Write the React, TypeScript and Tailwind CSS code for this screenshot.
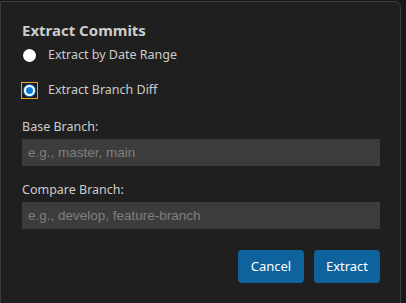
import React from 'react';

const font = { fontFamily: '"Noto Sans", "Open Sans", sans-serif' };

const Radio: React.FC<{ checked?: boolean; focused?: boolean }> = ({ checked, focused }) => (
  <span className={`flex h-[15px] w-[15px] items-center justify-center ${focused ? 'outline outline-1 outline-[#f0a020]' : ''}`}>
    {checked ? (
      <span className="flex h-[13px] w-[13px] items-center justify-center rounded-full bg-[#0b7ad1]">
        <span className="flex h-[11px] w-[11px] items-center justify-center rounded-full bg-white">
          <span className="h-[7px] w-[7px] rounded-full bg-[#0b7ad1]" />
        </span>
      </span>
    ) : (
      <span className="h-[13px] w-[13px] rounded-full bg-white" />
    )}
  </span>
);

const App: React.FC = () => {
  return (
    <div className="h-[303px] w-[406px] overflow-hidden bg-[#181818]" style={font}>
      <div className="mt-[1px] h-[320px] w-[401px] rounded-tr-md border border-[#3c3c3c] bg-[#1f1f1f] pl-[21px] pr-[20px] pt-[17px] text-[12.5px] text-[#cccccc]">
        <h2 className="text-[15px] font-bold leading-[22px] text-[#cccccc]">Extract Commits</h2>

        <label className="mt-[4px] flex h-[20px] items-center gap-[11px]">
          <Radio />
          <span>Extract by Date Range</span>
        </label>

        <label className="mt-[15px] flex h-[20px] items-center gap-[11px]">
          <Radio checked focused />
          <span>Extract Branch Diff</span>
        </label>

        <div className="mt-[17px] leading-[20px]">Base Branch:</div>
        <input
          className="mt-[2px] block h-[27px] w-full bg-[#3c3c3c] px-[6px] text-[13.5px] text-[#cccccc] outline-none placeholder:text-[#7f7f7f]"
          style={{ fontFamily: '"Liberation Sans", Arial, sans-serif' }}
          placeholder="e.g., master, main"
        />

        <div className="mt-[14px] leading-[20px]">Compare Branch:</div>
        <input
          className="mt-[2px] block h-[27px] w-full bg-[#3c3c3c] px-[6px] text-[13.5px] text-[#cccccc] outline-none placeholder:text-[#7f7f7f]"
          style={{ fontFamily: '"Liberation Sans", Arial, sans-serif' }}
          placeholder="e.g., develop, feature-branch"
        />

        <div className="mt-[21px] flex justify-end gap-[10px]">
          <button className="h-[33px] w-[66px] rounded-sm bg-[#0e639c] text-[13px] text-white">Cancel</button>
          <button className="h-[33px] w-[66px] rounded-sm bg-[#0e639c] text-[13px] text-white">Extract</button>
        </div>
      </div>
    </div>
  );
};

export default App;
